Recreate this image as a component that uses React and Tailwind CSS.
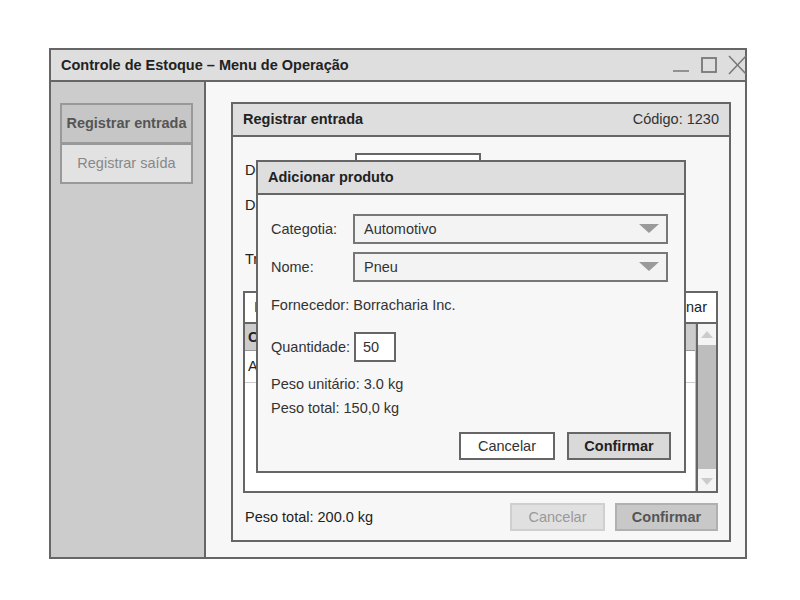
import React from 'react';

function Caret() {
  return (
    <svg width="20" height="10" viewBox="0 0 20 10" className="shrink-0">
      <polygon points="0,0 20,0 10,9" fill="#9a9a9a" />
    </svg>
  );
}

function Select({ value }) {
  return (
    <div className="flex items-center justify-between w-[315px] h-[30px] border-2 border-[#777] bg-[#f3f3f3] pl-[9px] pr-[7px]">
      <span>{value}</span>
      <Caret />
    </div>
  );
}

export default function App() {
  return (
    <div className="min-h-screen bg-white pt-[48px] pl-[49px] text-[14.5px] leading-[17px] text-[#222]" style={{ fontFamily: '"Liberation Sans", Arial, sans-serif' }}>
      {/* Window */}
      <div className="w-[698px] h-[511px] border-2 border-[#666] flex flex-col bg-[#f7f7f7]">
        {/* Title bar */}
        <div className="h-[32px] shrink-0 bg-[#dedede] border-b-2 border-[#666] flex items-center justify-between pl-[10px]">
          <span className="font-bold text-[14.5px] text-[#222]">Controle de Estoque – Menu de Operação</span>
          <svg width="74" height="20" viewBox="0 0 74 20" className="mr-[-2px]">
            <line x1="0" y1="16" x2="16" y2="16" stroke="#777" strokeWidth="1.5" />
            <rect x="29" y="3" width="14" height="14" fill="none" stroke="#777" strokeWidth="1.8" />
            <line x1="56" y1="1" x2="73" y2="19" stroke="#777" strokeWidth="1.5" />
            <line x1="73" y1="1" x2="56" y2="19" stroke="#777" strokeWidth="1.5" />
          </svg>
        </div>

        <div className="flex flex-1 min-h-0">
          {/* Sidebar */}
          <div className="w-[155px] shrink-0 bg-[#cccccc] border-r-2 border-[#666] pt-[21px] pl-[9px]">
            <div className="w-[133px] flex flex-col">
              <div className="h-[41px] flex items-center justify-center bg-[#c6c6c6] border-2 border-[#999] font-bold text-[#555]">
                Registrar entrada
              </div>
              <div className="h-[41px] -mt-[1px] flex items-center justify-center bg-[#e2e2e2] border-2 border-[#999] text-[#888]">
                Registrar saída
              </div>
            </div>
          </div>

          {/* Main */}
          <div className="flex-1 pt-[20px] pl-[25px] pr-[14px] pb-[14px] bg-[#f7f7f7]">
            <div className="relative w-[500px] h-[440px] border-2 border-[#666] flex flex-col">
              <div className="h-[33px] shrink-0 bg-[#dedede] border-b-2 border-[#666] flex items-center justify-between px-[10px]">
                <span className="font-bold">Registrar entrada</span>
                <span className="text-[#333]">Código: 1230</span>
              </div>

              <div className="flex-1 flex flex-col px-[12px]">
                <div className="mt-[16px] h-[34px] flex items-start">
                  <span className="w-[110px] mt-[9px]">Descrição:</span>
                  <div className="w-[126px] h-[30px] bg-white border-2 border-[#666]" />
                </div>
                <div className="h-[36px] flex items-center">
                  <span>Data:</span>
                </div>
                <div className="mt-[18px] h-[36px] flex items-center">
                  <span>Transportadora:</span>
                </div>

                {/* Table */}
                <div className="mt-[14px] -ml-[2px] w-[475px] h-[202px] border-2 border-[#666] bg-white flex flex-col">
                  <div className="h-[31px] shrink-0 border-b-2 border-[#666] flex items-center justify-between px-[9px]">
                    <span>Item</span>
                    <span>Selecionar</span>
                  </div>
                  <div className="flex flex-1 min-h-0">
                    <div className="flex-1 flex flex-col border-r border-[#bbb]">
                      <div className="h-[27px] bg-[#cccccc] border-b border-[#999] flex items-center px-[3px] font-bold">
                        Código
                      </div>
                      <div className="h-[32px] bg-white border-b border-[#ccc] flex items-center px-[3px]">
                        Automotivo
                      </div>
                    </div>
                    <div className="w-[20px] shrink-0 border-l-2 border-[#666] bg-[#f4f4f4] flex flex-col items-center">
                      <svg width="12" height="7" viewBox="0 0 12 7" className="mt-[7px]">
                        <polygon points="0,7 12,7 6,0" fill="#ccc" />
                      </svg>
                      <div className="mt-[7px] w-full flex-1 bg-[#bdbdbd]" />
                      <svg width="12" height="7" viewBox="0 0 12 7" className="mt-[9px] mb-[6px]">
                        <polygon points="0,0 12,0 6,7" fill="#ccc" />
                      </svg>
                    </div>
                  </div>
                </div>

                {/* Footer */}
                <div className="mt-[10px] -ml-[2px] pl-[2px] flex items-center justify-between w-[475px]">
                  <span>Peso total: 200.0 kg</span>
                  <div className="flex gap-[10px]">
                    <div className="w-[95px] h-[28px] flex items-center justify-center bg-[#e0e0e0] border-2 border-[#cfcfcf] text-[#999]">
                      Cancelar
                    </div>
                    <div className="w-[103px] h-[28px] flex items-center justify-center bg-[#c8c8c8] border-2 border-[#b0b0b0] font-bold text-[#555]">
                      Confirmar
                    </div>
                  </div>
                </div>
              </div>

              {/* Dialog */}
              <div className="absolute left-[23px] top-[56px] w-[430px] h-[313px] border-2 border-[#666] bg-[#f7f7f7] flex flex-col">
                <div className="h-[33px] shrink-0 bg-[#dedede] border-b-2 border-[#666] flex items-center px-[10px]">
                  <span className="font-bold">Adicionar produto</span>
                </div>
                <div className="flex-1 flex flex-col pl-[13px] pr-[13px] text-[#333]">
                  <div className="mt-[19px] flex items-center">
                    <span className="w-[82px]">Categotia:</span>
                    <Select value="Automotivo" />
                  </div>
                  <div className="mt-[8px] flex items-center">
                    <span className="w-[82px]">Nome:</span>
                    <Select value="Pneu" />
                  </div>
                  <div className="mt-[15px]">Fornecedor: Borracharia Inc.</div>
                  <div className="mt-[18px] flex items-center">
                    <span className="mr-[4px]">Quantidade:</span>
                    <div className="w-[42px] h-[30px] bg-white border-2 border-[#666] flex items-center pl-[7px]">50</div>
                  </div>
                  <div className="mt-[14px]">Peso unitário: 3.0 kg</div>
                  <div className="mt-[7px]">Peso total: 150,0 kg</div>
                  <div className="mt-[15px] flex justify-end gap-[12px]">
                    <div className="w-[96px] h-[28px] flex items-center justify-center bg-white border-2 border-[#666]">
                      Cancelar
                    </div>
                    <div className="w-[104px] h-[28px] flex items-center justify-center bg-[#d9d9d9] border-2 border-[#666] font-bold text-[#222]">
                      Confirmar
                    </div>
                  </div>
                </div>
              </div>
            </div>
          </div>
        </div>
      </div>
    </div>
  );
}
